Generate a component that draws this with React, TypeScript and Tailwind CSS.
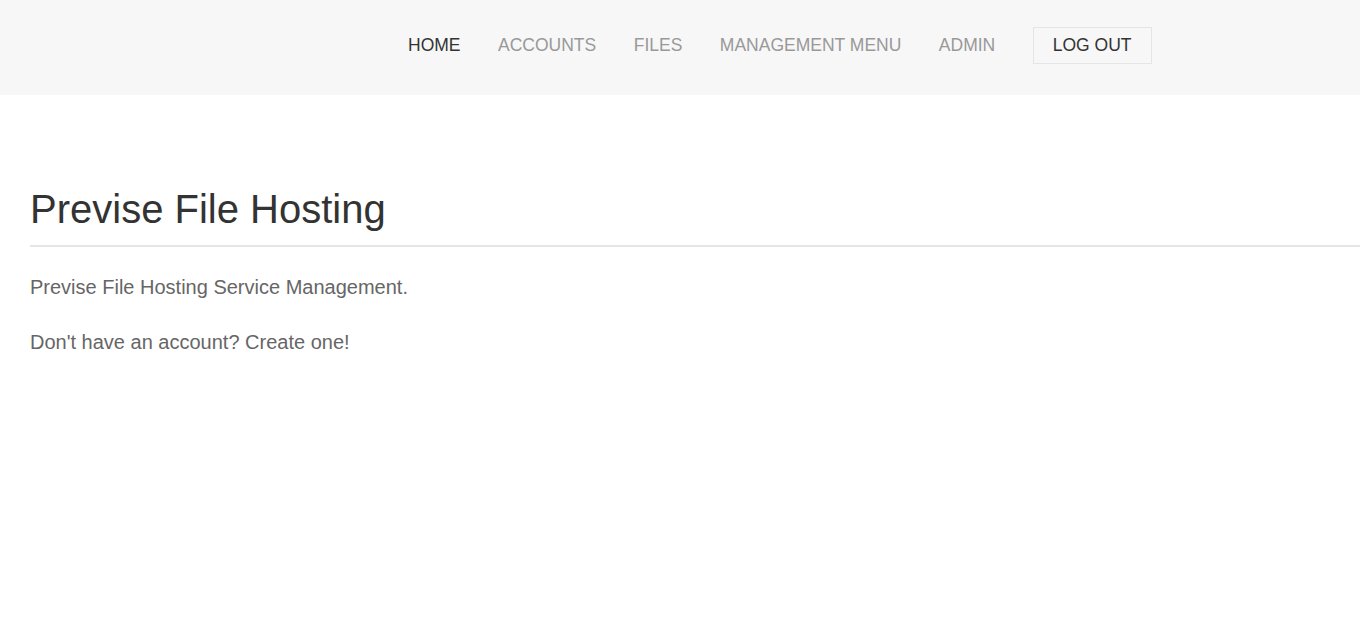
export default function App() {
  const font = { fontFamily: '"Liberation Sans", Arial, sans-serif' };
  const items = ["ACCOUNTS", "FILES", "MANAGEMENT MENU", "ADMIN"];
  return (
    <div className="min-h-[638px] bg-white" style={font}>
      <header className="h-[95px] bg-[#f7f7f7] flex items-center">
        <nav className="ml-[408px] mb-[4px] flex items-center gap-[37.5px] text-[17.5px] leading-none">
          <a className="text-[#333]">HOME</a>
          {items.map((t) => (
            <a key={t} className="text-[#999]">{t}</a>
          ))}
          <a className="text-[#333] border border-[#e5e5e5] px-[19px] h-[37px] flex items-center">LOG OUT</a>
        </nav>
      </header>
      <main className="pl-[30px] pt-[92px]">
        <h1 className="text-[40px] leading-[44px] text-[#333]">Previse File Hosting</h1>
        <div className="mt-[14px] h-[2px] bg-[#e5e5e5]" />
        <p className="mt-[26px] text-[20px] leading-[28px] text-[#666]">Previse File Hosting Service Management.</p>
        <p className="mt-[27px] text-[20px] leading-[28px] text-[#666]">Don't have an account? Create one!</p>
      </main>
    </div>
  );
}
